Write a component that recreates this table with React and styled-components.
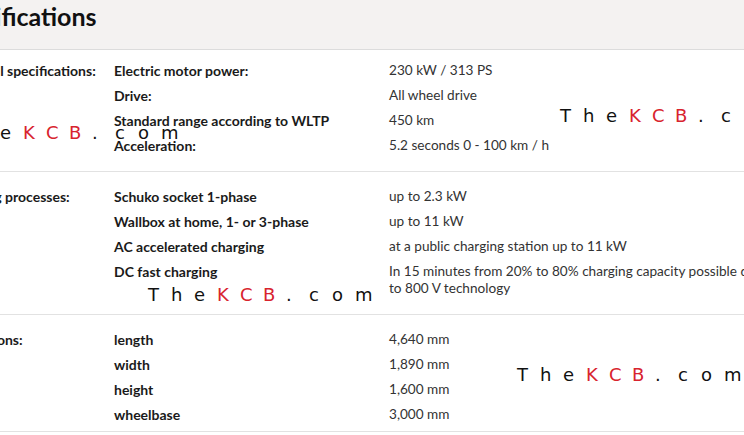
import React from "react";
import styled, { createGlobalStyle } from "styled-components";

const Global = createGlobalStyle`
  html, body { margin: 0; padding: 0; background: #ffffff; }
  body { overflow: hidden; width: 744px; height: 435px; }
`;

const Page = styled.div`
  position: relative;
  width: 744px;
  height: 435px;
  overflow: hidden;
  font-family: Lato, "Noto Sans", sans-serif;
  color: #1a1a1a;
`;

const Sheet = styled.div`
  margin-left: -54px;
  width: 860px;
`;

const TitleBar = styled.div`
  height: 50px;
  background: #f4f2f1;
  border-bottom: 1px solid #dcdcdc;
  display: flex;
  align-items: flex-start;
  padding-top: 1px;
  box-sizing: border-box;
`;

const Title = styled.h1`
  margin: 0 0 0 -4px;
  font-size: 25px;
  line-height: 30px;
  font-weight: 700;
  color: #111;
`;

const Section = styled.div`
  display: grid;
  grid-template-columns: 168px 275px 1fr;
  padding: ${(p) => p.$pt}px 0 ${(p) => p.$pb}px;
  border-bottom: 1px solid #e2e2e2;
`;

const Label = styled.div`
  grid-column: 1;
  grid-row: 1 / span 4;
  font-size: 14px;
  font-weight: 700;
  line-height: 17px;
  padding: 4px 0;
  white-space: nowrap;
`;

const Key = styled.div`
  grid-column: 2;
  font-size: 14px;
  font-weight: 700;
  line-height: 17px;
  padding: 4px 0;
  white-space: nowrap;
`;

const Value = styled.div`
  grid-column: 3;
  font-size: 13.6px;
  font-weight: 400;
  line-height: 17px;
  padding: 4px 0;
  color: #333;
  white-space: nowrap;
`;

const Watermark = styled.div`
  position: absolute;
  left: ${(p) => p.$x}px;
  top: ${(p) => p.$y}px;
  display: flex;
  font-family: "DejaVu Sans", sans-serif;
  font-size: 18px;
  line-height: 20px;
  pointer-events: none;
`;

const Char = styled.span`
  display: inline-block;
  width: 23px;
  color: ${(p) => (p.$red ? "#d8232e" : "#111")};
`;

const WM = ({ x, y }) => (
  <Watermark $x={x} $y={y}>
    {"TheKCB.com".split("").map((c, i) => (
      <Char key={i} $red={i >= 3 && i <= 5}>
        {c}
      </Char>
    ))}
  </Watermark>
);

const sections = [
  {
    label: "Technical specifications:",
    pt: 8,
    pb: 13,
    rows: [
      ["Electric motor power:", "230 kW / 313 PS"],
      ["Drive:", "All wheel drive"],
      ["Standard range according to WLTP", "450 km"],
      ["Acceleration:", "5.2 seconds 0 - 100 km / h"],
    ],
  },
  {
    label: "Charging processes:",
    pt: 12,
    pb: 13,
    rows: [
      ["Schuko socket 1-phase", "up to 2.3 kW"],
      ["Wallbox at home, 1- or 3-phase", "up to 11 kW"],
      ["AC accelerated charging", "at a public charging station up to 11 kW"],
      [
        "DC fast charging",
        <>
          In 15 minutes from 20% to 80% charging capacity possible due
          <br />
          to 800 V technology
        </>,
      ],
    ],
  },
  {
    label: "Dimensions:",
    pt: 12,
    pb: 4,
    rows: [
      ["length", "4,640 mm"],
      ["width", "1,890 mm"],
      ["height", "1,600 mm"],
      ["wheelbase", "3,000 mm"],
    ],
  },
];

export default function App() {
  return (
    <Page>
      <Global />
      <Sheet>
        <TitleBar>
          <Title>Specifications</Title>
        </TitleBar>
        {sections.map((s) => (
          <Section key={s.label} $pt={s.pt} $pb={s.pb}>
            <Label>{s.label}</Label>
            {s.rows.map(([k, v], i) => (
              <React.Fragment key={i}>
                <Key>{k}</Key>
                <Value>{v}</Value>
              </React.Fragment>
            ))}
          </Section>
        ))}
      </Sheet>
      <WM x={-46} y={123} />
      <WM x={560} y={106} />
      <WM x={148} y={285} />
      <WM x={517} y={365} />
    </Page>
  );
}
